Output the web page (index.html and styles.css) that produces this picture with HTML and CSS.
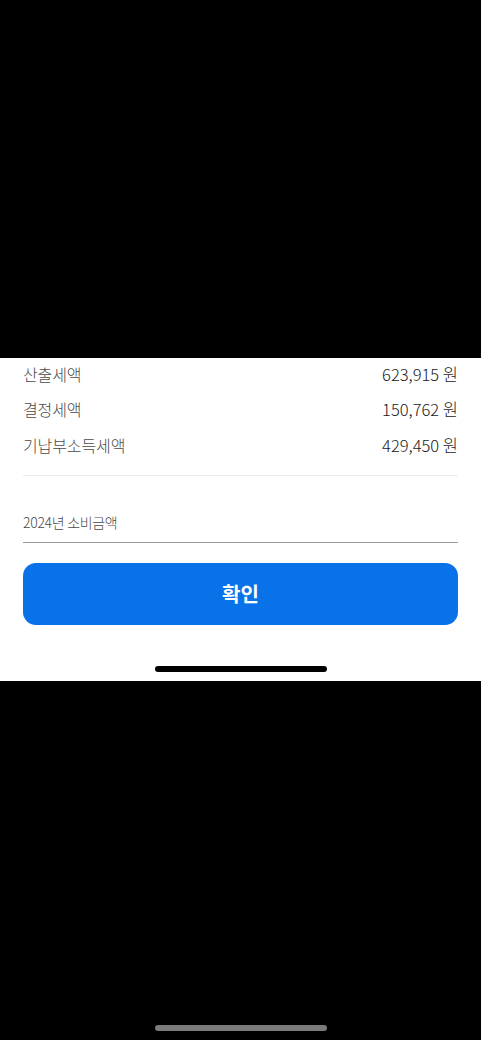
FILE: index.html
```html
<!DOCTYPE html>
<html>

<head>
  <title>소비금액 입력</title>
  <link rel="stylesheet" href="styles.css">
</head>

<body>
  <div class="backdrop-top"></div>

  <div class="sheet">
    <div class="tax-list">
      <div class="tax-row">
        <span class="tax-label">산출세액</span>
        <span class="tax-value">623,915 원</span>
      </div>
      <div class="tax-row">
        <span class="tax-label">결정세액</span>
        <span class="tax-value">150,762 원</span>
      </div>
      <div class="tax-row">
        <span class="tax-label">기납부소득세액</span>
        <span class="tax-value">429,450 원</span>
      </div>
    </div>

    <div class="divider"></div>

    <div class="amount-field">
      <span class="field-label">2024년 소비금액</span>
    </div>

    <button class="confirm-button">확인</button>

    <div class="home-bar"></div>
  </div>

  <div class="backdrop-bottom">
    <div class="home-bar-dim"></div>
  </div>
</body>

</html>
```

FILE: styles.css
```css
:root {
  --blue: #0a72e8;
  --label-gray: #4a4a4a;
  --value-dark: #1a1a1a;
  --line-light: #ececec;
  --line-mid: #9a9a9a;
}

body {
  margin: 0;
  padding: 0;
  background-color: #000000;
  font-family: "Noto Sans CJK KR", "Noto Sans", sans-serif;
  width: 481px;
}

.backdrop-top {
  height: 358px;
}

/* White bottom sheet */
.sheet {
  background-color: #ffffff;
  height: 323px;
  padding: 0 23px;
  box-sizing: border-box;
  display: flex;
  flex-direction: column;
  overflow: hidden;
}

.tax-list {
  display: flex;
  flex-direction: column;
  margin-top: -2px;
}

.tax-row {
  display: flex;
  justify-content: space-between;
  align-items: center;
  height: 35.5px;
}

.tax-label {
  color: var(--label-gray);
  font-size: 16px;
  font-weight: 300;
  letter-spacing: -0.1px;
}

.tax-value {
  color: var(--value-dark);
  font-size: 16.5px;
  font-weight: 300;
}

.divider {
  height: 1px;
  background-color: var(--line-light);
  margin-top: 12px;
}

.amount-field {
  margin-top: 35px;
  padding-bottom: 10px;
  border-bottom: 1.5px solid var(--line-mid);
  line-height: 20px;
}

.field-label {
  font-size: 14px;
  color: var(--label-gray);
  font-weight: 300;
  letter-spacing: -0.3px;
}

.confirm-button {
  margin-top: 20px;
  height: 62px;
  border: none;
  border-radius: 13px;
  background-color: var(--blue);
  color: #ffffff;
  font-family: "Noto Sans CJK KR", sans-serif;
  font-size: 20px;
  font-weight: 700;
  cursor: pointer;
}

.home-bar {
  align-self: center;
  width: 172px;
  height: 6px;
  border-radius: 3px;
  background-color: #000000;
  margin-top: 41px;
}

.backdrop-bottom {
  height: 359px;
  display: flex;
  justify-content: center;
  align-items: flex-end;
}

.home-bar-dim {
  width: 172px;
  height: 6px;
  border-radius: 3px;
  background-color: #7a7a7a;
  margin-bottom: 9px;
}
```
